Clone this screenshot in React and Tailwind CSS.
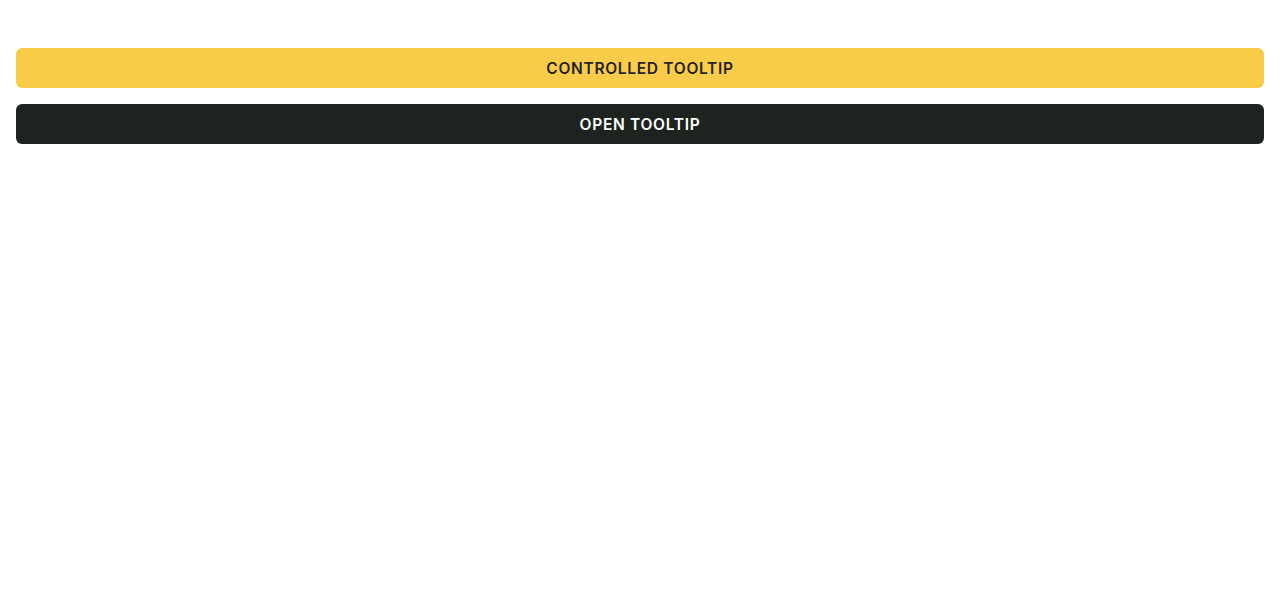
export default function App() {
  return (
    <div className="min-h-screen bg-white px-4 pt-12" style={{ fontFamily: 'Inter, "Noto Sans", sans-serif' }}>
      <div className="flex flex-col gap-4">
        <button className="h-10 w-full rounded-md bg-[#facc4a] pt-0.5 text-[15.5px] font-semibold tracking-[0.045em] text-[#1f2320]">
          CONTROLLED TOOLTIP
        </button>
        <button className="h-10 w-full rounded-md bg-[#1f2320] pt-0.5 text-[15.5px] font-semibold tracking-[0.045em] text-white">
          OPEN TOOLTIP
        </button>
      </div>
    </div>
  )
}
